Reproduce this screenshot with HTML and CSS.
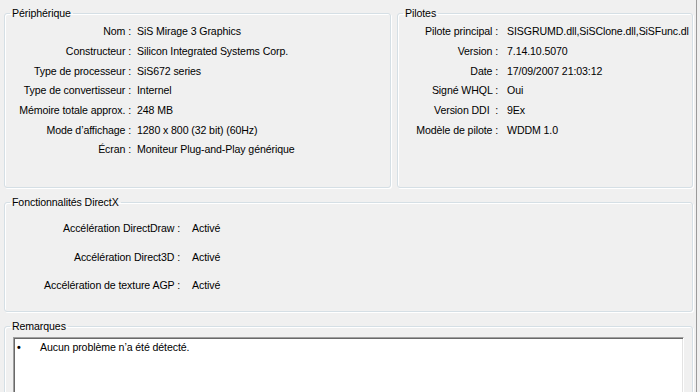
FILE: index.html
```html
<!DOCTYPE html>
<html lang="fr">
<head>
<meta charset="utf-8">
<title>Affichage</title>
<link rel="stylesheet" href="styles.css">
</head>
<body>
<div class="window">
  <div class="top-row">
    <fieldset class="group group-device">
      <legend>Périphérique</legend>
      <div class="kv kv-device">
        <span class="k">Nom :</span><span class="v">SiS Mirage 3 Graphics</span>
        <span class="k">Constructeur :</span><span class="v">Silicon Integrated Systems Corp.</span>
        <span class="k">Type de processeur :</span><span class="v">SiS672 series</span>
        <span class="k">Type de convertisseur :</span><span class="v">Internel</span>
        <span class="k">Mémoire totale approx. :</span><span class="v">248 MB</span>
        <span class="k">Mode d’affichage :</span><span class="v">1280 x 800 (32 bit) (60Hz)</span>
        <span class="k">Écran :</span><span class="v">Moniteur Plug-and-Play générique</span>
      </div>
    </fieldset>
    <fieldset class="group group-drivers">
      <legend>Pilotes</legend>
      <div class="kv kv-drivers">
        <span class="k">Pilote principal :</span><span class="v">SISGRUMD.dll,SiSClone.dll,SiSFunc.dl</span>
        <span class="k">Version :</span><span class="v">7.14.10.5070</span>
        <span class="k">Date :</span><span class="v">17/09/2007 21:03:12</span>
        <span class="k">Signé WHQL :</span><span class="v">Oui</span>
        <span class="k">Version DDI&nbsp; :</span><span class="v">9Ex</span>
        <span class="k">Modèle de pilote :</span><span class="v">WDDM 1.0</span>
      </div>
    </fieldset>
  </div>
  <fieldset class="group group-dx">
    <legend>Fonctionnalités DirectX</legend>
    <div class="kv kv-dx">
      <span class="k">Accélération DirectDraw :</span><span class="v">Activé</span>
      <span class="k">Accélération Direct3D :</span><span class="v">Activé</span>
      <span class="k">Accélération de texture AGP :</span><span class="v">Activé</span>
    </div>
  </fieldset>
  <fieldset class="group group-notes">
    <legend>Remarques</legend>
    <div class="notes-box">
      <div class="note"><span class="bullet">•</span><span>Aucun problème n’a été détecté.</span></div>
    </div>
  </fieldset>
</div>
</body>
</html>
```

FILE: styles.css
```css
html, body {
  margin: 0;
  padding: 0;
}
body {
  width: 700px;
  height: 392px;
  overflow: hidden;
  background: #f0f0f0;
  font-family: "Liberation Sans", Arial, sans-serif;
  font-size: 10.6px;
  letter-spacing: -0.1px;
  color: #000;
}
.window {
  box-sizing: border-box;
  width: 697px;
  height: 392px;
  padding: 6px 3px 0 4px;
  border-right: 1px solid #9a9a9a;
}
.top-row {
  display: flex;
  gap: 6px;
  height: 182px;
}
.group {
  box-sizing: border-box;
  margin: 0;
  padding: 0;
  min-width: 0;
  border: 1px solid #d5dfe5;
  border-radius: 3px;
  box-shadow: 1px 1px 0 #fff, inset 1px 1px 0 #fff;
}
.group legend {
  margin-left: 5px;
  padding: 0 2px;
  line-height: 14px;
  color: #000;
}
.group-device {
  width: 387px;
  flex: none;
}
.group-drivers {
  flex: 1;
}
.kv {
  display: grid;
  white-space: nowrap;
}
.kv .k {
  text-align: right;
}
.kv-device {
  grid-template-columns: 126px auto;
  column-gap: 6px;
  padding-top: 1.5px;
  grid-auto-rows: 19.7px;
  align-items: center;
}
.kv-drivers {
  grid-template-columns: 100px auto;
  column-gap: 9px;
  padding-top: 1.5px;
  grid-auto-rows: 19.7px;
  align-items: center;
}
.group-dx {
  margin-top: 7px;
  height: 117px;
}
.kv-dx {
  grid-template-columns: 175px auto;
  column-gap: 12px;
  padding-top: 12px;
  row-gap: 14.5px;
  line-height: 14px;
}
.group-notes {
  margin-top: 7px;
  height: 90px;
}
.notes-box {
  box-sizing: border-box;
  margin: 4px 8px 0 8px;
  height: 70px;
  background: #fff;
  border: 1px solid;
  border-color: #a0a0a0 #fff #fff #a0a0a0;
  box-shadow: inset 1px 1px 0 #696969, inset -1px -1px 0 #e3e3e3;
  padding: 2px 2px 0 3px;
}
.note {
  display: flex;
  line-height: 14px;
}
.bullet {
  width: 23px;
  flex: none;
  font-weight: bold;
}
```
